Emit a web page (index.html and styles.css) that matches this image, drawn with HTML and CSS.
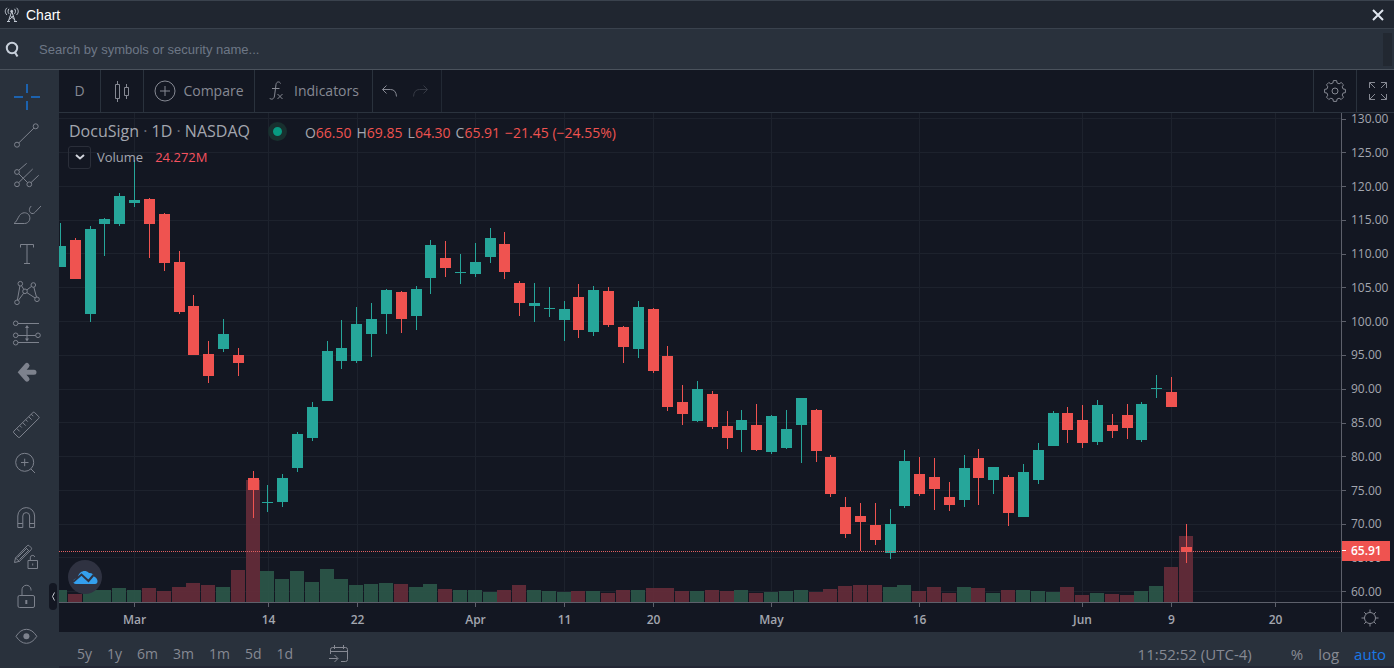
FILE: index.html
```html
<!DOCTYPE html>
<html lang="en">
<head>
<meta charset="utf-8">
<title>Chart</title>
<link rel="stylesheet" href="styles.css">
</head>
<body>
<div class="app">
  <header class="titlebar">
    <svg class="antenna" viewBox="0 0 16 16" width="16" height="16" aria-hidden="true">
      <path d="M7.500 5 4.300 14.500M8 5l3.200 9.500M6.500 9l3.800 3.500M9.200 9 5.500 12.500M3 14.500h3M10 14.500h3"/>
      <circle cx="7.700" cy="4.300" r="1"/>
      <path d="M5 1.800c-1.300 1.500-1.300 3.500 0 5M10.500 1.800c1.300 1.500 1.300 3.500 0 5M3 .8c-2.300 2.200-2.300 5 0 7.200M12.500.8c2.300 2.200 2.300 5 0 7.200"/>
    </svg>
    <h1 class="title">Chart</h1>
    <button class="close" aria-label="Close">
      <svg viewBox="0 0 12 12" width="12" height="12"><path d="M1 1l10 10M11 1 1 11"/></svg>
    </button>
  </header>

  <form class="search" role="search">
    <label class="search-label" for="q" aria-label="Search">
      <svg viewBox="0 0 16 18" width="16" height="18"><circle cx="7" cy="7" r="5.200"/><path d="M10 11.500l2.500 4"/></svg>
    </label>
    <input class="search-input" id="q" type="text" placeholder="Search by symbols or security name...">
    <span class="search-thumb"></span>
  </form>

  <div class="workspace">
    <nav class="tools" aria-label="Drawing tools">
      <div class="tool-group">
        <button class="tool tool-active" aria-label="Cross"><svg viewBox="0 0 28 28"><path d="M1 13h9M18 13h9M14 0v9M14 17v9"/></svg></button>
        <button class="tool" aria-label="Trend line"><svg viewBox="0 0 28 28"><circle cx="4" cy="21.700" r="2.500"/><circle cx="22.700" cy="3.300" r="2.500"/><path d="M5.800 19.900 20.900 5.100"/></svg></button>
        <button class="tool" aria-label="Pitchfork"><svg viewBox="0 0 28 28"><circle cx="4" cy="10" r="2.400"/><circle cx="4" cy="22.300" r="2.400"/><circle cx="16.300" cy="22.300" r="2.400"/><path d="M5.700 8.300l8-7M5.700 20.600 19.700 7M18 20.600l7.700-7.300M5.700 11.700l8.900 8.900"/></svg></button>
        <button class="tool" aria-label="Brush"><svg viewBox="0 0 28 28"><path d="M1 22.500c2.500-1.500 3.500-5 5.500-8 2.500-3.500 7-3.500 9.300-.8 2.600 3.800.2 8.800-4.300 8.800zM18.300 5c-3 2.500-2.300 7 .7 7.500 1.500.2 2.300-.4 3-1.200L28 5"/></svg></button>
        <button class="tool" aria-label="Text"><svg viewBox="0 0 28 28"><path d="M7.500 7.500v-3h13v3M14 4.500v19M11 23.500h6"/></svg></button>
        <button class="tool" aria-label="Pattern"><svg viewBox="0 0 28 28"><circle cx="7.300" cy="4.700" r="2.300"/><circle cx="20.300" cy="6" r="2.300"/><circle cx="12" cy="12.300" r="2.300"/><circle cx="24" cy="20.300" r="2.300"/><circle cx="4" cy="23.300" r="2.300"/><path d="M6.900 7 4.400 21M8.500 6.700l2.300 3.700M10.700 14.200l-5.400 7.200M13.900 10.900l4.600-3.500M20.800 8.200l2.700 9.900M13.900 13.600l8.200 5.400"/></svg></button>
        <button class="tool" aria-label="Position"><svg viewBox="0 0 28 28"><circle cx="2.700" cy="5.300" r="2.300"/><circle cx="2.700" cy="17.300" r="2.300"/><circle cx="2.700" cy="24.700" r="2.300"/><circle cx="25" cy="17.300" r="2.300"/><path d="M5 5.500h21M5 17.500h17.700M5 24.500h21M14 9v13"/><path class="fill" d="M14 7l2 3h-4zM14 23.500l2-3h-4z"/></svg></button>
        <button class="tool" aria-label="Hide tools"><svg viewBox="0 0 28 28"><path class="heavy" d="M14 8.500l-6 6.800 6 6.800M9 15.300h12"/></svg></button>
      </div>
      <div class="tool-group">
        <button class="tool" aria-label="Measure"><svg viewBox="0 0 28 28"><path d="M.8 20.200 20 1.500q.8-.8 1.600 0l4.200 4.200q.8.800 0 1.600L6.800 26.200q-.8.800-1.600 0L.8 21.800q-.8-.8 0-1.600zM3.700 17.400l3 3M6.700 14.500l2 2M9.700 11.600l3 3M12.700 8.600l2 2M15.700 5.700l3 3M18.300 3.200l2 2"/></svg></button>
        <button class="tool" aria-label="Zoom in"><svg viewBox="0 0 28 28"><circle cx="11.700" cy="12.300" r="9"/><path d="M18 19l4 4M8 12.500h7.500M11.700 8.700v7.500"/></svg></button>
      </div>
      <div class="tool-group">
        <button class="tool" aria-label="Magnet"><svg viewBox="0 0 28 28"><path d="M4.800 23.500V12a8.400 8.400 0 0 1 16.800 0v11.500h-5V12a3.400 3.400 0 0 0-6.800 0v11.500zM4.800 19.500h5M16.600 19.500h5"/></svg></button>
        <button class="tool" aria-label="Lock drawing mode"><svg viewBox="0 0 28 28"><path d="M1.500 19.500l1-4.500L14.200 2.700q1-.9 2 0l2 2q.9 1 0 2L6.500 18.300zM12.500 4.500l4 4M4.500 14.500 14 5M6.500 16.500l9.500-9.500M2.500 15l4 3.500"/><path d="M15 17.500h9.500v8H15zM17.300 17.500v-2.700a2.300 2.300 0 0 1 4.500-.8M19.700 20.500v2"/></svg></button>
        <button class="tool" aria-label="Lock all"><svg viewBox="0 0 28 28"><rect x="5" y="13.500" width="16.500" height="12" rx="1.500"/><path d="M9 13.500V8a4.500 4.500 0 0 1 9-.5v1"/><path class="bold" d="M13.300 18v4"/></svg></button>
        <button class="tool" aria-label="Hide all"><svg viewBox="0 0 28 28"><path d="M3 15.300q4.500-7 10.400-7t10.400 7q-4.500 7-10.400 7T3 15.300z"/><circle class="fill" cx="13.400" cy="15.300" r="3"/></svg></button>
      </div>
      <button class="collapse" aria-label="Collapse toolbar"><svg viewBox="0 0 8 27" width="8" height="27"><path d="M5.500 9.500 3.500 13.500l2 4"/></svg></button>
    </nav>

    <main class="content">
      <div class="toolbar">
        <button class="bar-btn interval">D</button>
        <button class="bar-btn style-btn" aria-label="Candles"><svg viewBox="0 0 18 22" width="18" height="22"><path d="M2.500 4.500h4v14h-4zM4.500 1v3.500M4.500 18.500V22M11.500 7.500h4v8h-4zM13.500 4v3.500M13.500 15.500V19"/></svg></button>
        <button class="bar-btn compare"><svg viewBox="0 0 22 22" width="22" height="22"><circle cx="11" cy="11" r="10"/><path d="M6 11h10M11 6v10"/></svg>Compare</button>
        <button class="bar-btn indicators"><svg viewBox="0 0 18 22" width="18" height="22"><path d="M12.500 3.500C12 1.500 8.500 1 8 4.500L6.500 16c-.5 3.500-3.500 4-5 2M4 8.500h7.500M9.500 14l5 5M14.500 14l-5 5"/></svg>Indicators</button>
        <div class="history">
          <button class="icon-btn" aria-label="Undo"><svg viewBox="0 0 18 14" width="18" height="14"><path d="M5.500 1.500l-4 4 4 4M1.500 5.500h8q5.500 0 6 7"/></svg></button>
          <button class="icon-btn redo" aria-label="Redo"><svg viewBox="0 0 18 14" width="18" height="14"><path d="M11.500 1.500l4 4-4 4M15.500 5.500h-8q-5.500 0-6 7"/></svg></button>
        </div>
        <button class="bar-btn settings" aria-label="Settings"><svg viewBox="0 0 24 24" width="24" height="24"><circle cx="12" cy="12" r="3"/><path id="gear" d=""/></svg></button>
        <button class="bar-btn full" aria-label="Full screen"><svg viewBox="0 0 20 20" width="20" height="20"><path d="M1.500 7V1.500H7M1.500 1.500 7 7M13 1.500h5.500V7M18.500 1.500 13 7M1.500 13v5.500H7M1.500 18.500 7 13M18.500 13v5.500H13M18.500 18.500 13 13"/></svg></button>
      </div>

      <div class="chart">
        <section class="plot" aria-label="Price chart">
          <svg class="canvas" id="canvas" viewBox="0 0 1282 489" preserveAspectRatio="none"></svg>
          <div class="legend">
            <div class="legend-row">
              <h2 class="symbol">DocuSign <i>·</i> 1D <i>·</i> NASDAQ</h2>
              <span class="status"></span>
              <p class="ohlc"><span>O<b>66.50</b></span><span>H<b>69.85</b></span><span>L<b>64.30</b></span><span>C<b>65.91</b></span><b>−21.45 (−24.55%)</b></p>
            </div>
            <div class="legend-row volume-row">
              <button class="toggle" aria-label="Toggle legend"><svg viewBox="0 0 12 8" width="12" height="8"><path d="M2 2l4 3.500L10 2"/></svg></button>
              <span class="study">Volume</span><b class="study-value">24.272M</b>
            </div>
          </div>
          <a class="brand" href="#" aria-label="Charting library"><svg viewBox="0 0 34 34" width="34" height="34">
            <path class="cloud" d="M8 24C4.500 24 4 19.500 8 18.500c1-.3 1.500-.7 2-2 1.500-5 7-7.500 11-3.500 3-.3 4.500 1.500 5 3.500 4 1.500 5 7.500 1 7.500z"/>
            <path class="trend" d="M5 22l8.500-7.500 7 6.500 5-6"/>
          </svg></a>
        </section>
        <aside class="prices" aria-label="Price scale">
          <ol class="price-list">
            <li>130.00</li><li>125.00</li><li>120.00</li><li>115.00</li><li>110.00</li><li>105.00</li><li>100.00</li><li>95.00</li><li>90.00</li><li>85.00</li><li>80.00</li><li>75.00</li><li>70.00</li><li>65.00</li><li>60.00</li>
          </ol>
          <span class="last-price">65.91</span>
        </aside>
        <svg class="times" id="times"></svg>
        <button class="axis-settings" aria-label="Axis settings"><svg viewBox="0 0 18 18" width="18" height="18"><circle cx="9" cy="9" r="5.500"/><path d="M9 3.500v-3M9 14.500v3M3.500 9h-3M14.500 9h3M5 5 3.200 3.200M13 5l1.800-1.800M5 13l-1.800 1.800M13 13l1.800 1.800"/></svg></button>
      </div>

      <footer class="bottom">
        <button class="range">5y</button><button class="range">1y</button><button class="range">6m</button><button class="range">3m</button><button class="range">1m</button><button class="range">5d</button><button class="range">1d</button>
        <button class="range goto" aria-label="Go to date"><svg viewBox="0 0 20 18" width="20" height="18"><path d="M1.500 9V4.500q0-2 2-2h13q2 0 2 2v10q0 2-2 2H12M1.500 6.500h17M5.500 0v4M14.500 0v4M0 13.500h8.500M5.500 10l3.500 3.500L5.500 17"/></svg></button>
        <button class="scale clock">11:52:52 (UTC-4)</button>
        <button class="scale percent">%</button><button class="scale log">log</button><button class="scale auto">auto</button>
      </footer>
    </main>
  </div>
</div>
<script src="chart.js"></script>
</body>
</html>
```

FILE: styles.css
```css
* { box-sizing: border-box; }
body {
  margin: 0;
  background: #29313c;
  color: #868993;
  font: 14px/20px "Open Sans", "Noto Sans", sans-serif;
}
button {
  display: flex;
  align-items: center;
  justify-content: center;
  margin: 0;
  padding: 0;
  border: 0;
  background: none;
  color: inherit;
  font: inherit;
  cursor: pointer;
}
svg { flex: none; fill: none; stroke: currentColor; }
.app { display: flex; flex-direction: column; min-height: 100vh; }

.titlebar {
  display: flex;
  align-items: center;
  height: 29px;
  padding: 0 10px 0 4px;
  border-top: 1px solid #3a424d;
  border-bottom: 1px solid #3a424d;
  background: #202630;
  color: #fff;
}
.antenna { color: #c3cad4; }
.antenna circle { fill: currentColor; }
.title { margin: 0 auto 0 6px; font: 14px/20px "Liberation Sans", Arial, sans-serif; }
.close svg { stroke-width: 2; color: #dfe5ee; }

.search {
  display: flex;
  align-items: center;
  height: 41px;
  padding: 1px 2px 0 5px;
  border-bottom: 1px solid #4a525c;
}
.search-label { display: flex; color: #c8d0db; }
.search-label svg { stroke-width: 2; }
.search-input {
  flex: 1;
  margin-left: 18px;
  padding: 0;
  border: 0;
  outline: 0;
  background: none;
  color: #d0d4dc;
  font: 13px/20px "Liberation Sans", Arial, sans-serif;
}
.search-input::placeholder { color: #6d7786; opacity: 1; }
.search-thumb { width: 9px; height: 33px; background: #222831; }

.workspace { display: flex; flex: 1; }
.tools {
  position: relative;
  display: flex;
  flex-direction: column;
  gap: 15px;
  width: 59px;
  padding: 8px 5px 0 0;
  color: #7d828d;
}
.tool { width: 54px; height: 39px; }
.tool svg { width: 28px; height: 28px; overflow: visible; }
.tool-active { color: #1c62ae; }
.tool-active svg { stroke-width: 2; }
.fill { fill: currentColor; stroke: none; }
.heavy { stroke-width: 5; stroke-linecap: round; }
.bold { stroke-width: 2; }
.collapse {
  position: absolute;
  right: 2px;
  bottom: 58px;
  border-radius: 4px;
  background: #131722;
  color: #c3c7cf;
}

.content { display: flex; flex: 1; flex-direction: column; min-width: 0; }
.toolbar {
  display: flex;
  height: 43px;
  border-bottom: 1px solid #2b333e;
  background: #131722;
}
.bar-btn { border-right: 1px solid #2a323d; gap: 8px; }
.interval { width: 42px; }
.style-btn { width: 43px; }
.compare { width: 111px; gap: 7px; }
.indicators { width: 118px; }
.history {
  display: flex;
  align-items: center;
  justify-content: center;
  gap: 13px;
  width: 69px;
  padding-right: 3px;
  border-right: 1px solid #222934;
}
.redo { color: #363a45; }
.settings { width: 44px; margin-left: auto; border-left: 1px solid #2a323d; }
.full { width: 37px; padding-left: 4px; border: 0; }

.chart {
  display: grid;
  flex: 1;
  grid-template-columns: 1fr 53px;
  grid-template-rows: 1fr 30px;
  background: #131722;
}
.plot { position: relative; min-width: 0; }
.canvas { position: absolute; width: 100%; height: 100%; stroke: none; }
.grid { fill: #1d222d; }
.up { fill: #26a69a; }
.down { fill: #ef5350; }
.vol-up { fill: #2b5749; opacity: 0.92; }
.vol-down { fill: #652d39; opacity: 0.92; }
.last-line { stroke: #e06060; stroke-dasharray: 1 1; }

.legend { position: absolute; top: 7px; left: 10px; color: #a3a6af; }
.legend b { color: #f7525f; font-weight: 400; }
.legend-row { display: flex; align-items: center; height: 22px; }
.symbol { margin: 0; font-size: 16px; font-weight: 400; }
.symbol i { color: #6a6d78; font-style: normal; }
.status {
  width: 19px;
  height: 19px;
  margin: 0 18px;
  border: 5px solid #18302f;
  border-radius: 50%;
  background: #089981;
}
.ohlc { display: flex; gap: 5px; margin: 3px 0 0; font-size: 14px; }
.legend .ohlc b { color: #ef5350; }
.volume-row { margin-top: 4px; font-size: 13px; }
.toggle {
  width: 23px;
  height: 23px;
  margin: 0 6px 0 -1px;
  border: 1px solid #2a2e39;
  border-radius: 3px;
  color: #d1d4dc;
}
.toggle svg { stroke-width: 2; }
.study-value { margin-left: 12px; }
.brand {
  position: absolute;
  bottom: 8px;
  left: 9px;
  display: flex;
  border-radius: 50%;
  background: #2f3241;
}
.cloud { fill: #34a0ee; stroke: none; }
.trend { stroke: #2f3241; stroke-width: 2; }

.prices {
  position: relative;
  overflow: hidden;
  border-left: 1px solid #5d606b;
  color: #a3a6af;
  font-size: 12px;
  line-height: 16px;
}
.price-list {
  display: flex;
  flex-direction: column;
  justify-content: space-between;
  height: 100%;
  margin: -2px 0 0;
  padding: 0;
  list-style: none;
}
.price-list li { display: flex; align-items: center; gap: 5px; }
.price-list li::before { width: 4px; height: 1px; background: #5d606b; content: ""; }
.last-price {
  position: absolute;
  bottom: 41px;
  left: -1px;
  width: 49px;
  padding: 2px 0 2px 10px;
  background: #ef5350;
  color: #fff;
  font-weight: 600;
}
.last-price::before {
  position: absolute;
  top: 9px;
  left: 0;
  width: 5px;
  height: 1px;
  background: #fff;
  content: "";
}
.times { width: 100%; height: 30px; border-top: 1px solid #5d606b; overflow: hidden; }
.times line { stroke: #5d606b; }
.times text { fill: #a3a6af; stroke: none; font-size: 12px; font-weight: 600; text-anchor: middle; }
.axis-settings { border-top: 1px solid #5d606b; border-left: 1px solid #5d606b; padding-left: 4px; }

.bottom { display: flex; align-items: center; gap: 15px; height: 36px; padding: 10px 8px 0 18px; border-bottom: 2px solid #232735; }
.goto { margin-left: 21px; }
.scale { font-size: 15px; }
.clock { margin-left: auto; }
.percent { margin-left: 24px; }
.auto { color: #1a78e6; }
```

FILE: chart.js
```js
// Each session: wick top, body top, body bottom, wick bottom, volume top, direction (1 = up).
const sessions = [
  [223,246,267,267,590,1],[238,240,279,279,594,0],[226,229,314,322,590,1],[218,219,224,256,590,1],
  [193,196,224,226,588,1],[160,200,203,207,590,1],[198,199,224,258,588,0],[213,214,263,271,591,0],
  [251,262,312,314,587,0],[295,306,355,355,583,0],[341,354,376,383,585,0],[319,334,349,352,587,1],
  [348,355,363,376,570,0],[471,478,490,518,480,0],[485,502,503,512,571,1],[474,478,502,507,579,1],
  [432,434,468,472,571,1],[402,407,438,441,582,1],[341,351,401,401,569,1],[320,348,361,369,579,1],
  [307,324,361,363,585,1],[303,319,334,357,584,1],[289,290,314,334,583,1],[291,292,319,333,584,0],
  [286,289,316,330,587,1],[240,245,278,294,584,1],[241,258,268,277,589,0],[254,272,273,284,590,1],
  [243,262,274,277,590,1],[228,238,257,263,592,1],[232,244,272,279,590,0],[281,283,303,316,585,0],
  [283,303,306,322,590,1],[287,308,309,317,591,1],[301,309,320,341,592,1],[284,297,330,338,591,0],
  [286,290,332,336,591,1],[287,291,325,327,593,0],[326,327,347,363,590,0],[301,307,349,358,590,1],
  [308,309,371,373,588,0],[346,356,407,411,588,0],[385,402,414,425,591,0],[381,389,421,422,591,1],
  [391,394,427,429,590,0],[411,426,438,449,591,0],[410,420,430,452,590,1],[404,425,450,451,593,0],
  [415,416,452,454,592,1],[410,429,448,449,591,1],[398,398,425,463,590,1],[409,410,451,462,592,0],
  [455,457,494,497,589,0],[497,507,534,538,586,0],[503,516,522,551,585,0],[503,525,540,545,585,0],
  [509,524,553,559,587,1],[450,461,506,508,585,1],[457,474,494,496,591,0],[458,477,489,510,587,0],
  [482,497,505,511,593,0],[455,468,500,507,587,1],[449,458,478,505,588,0],[467,467,480,494,593,1],
  [475,477,513,526,590,0],[464,472,517,517,590,1],[443,450,480,484,591,1],[411,413,446,446,592,1],
  [407,413,430,443,587,0],[405,420,443,448,595,0],[400,405,442,445,593,1],[414,425,431,438,594,0],
  [404,415,428,439,595,0],[402,404,440,442,591,1],[375,388,389,398,586,1],[377,392,407,407,567,0],
  [524,547,552,563,536,0]
];
const dates = [["Mar",75],["14",209],["22",298],["Apr",416],["11",505],["20",594],["May",712],["16",860],["Jun",1023],["9",1112],["20",1216]];

const NS = "http://www.w3.org/2000/svg";
const TOP = 113;
const WIDTH = 1282;
const HEIGHT = 489;
const STEP = 14.814;

function add(parent, name, attrs) {
  const el = document.createElementNS(NS, name);
  for (const key in attrs) el.setAttribute(key, attrs[key]);
  parent.appendChild(el);
  return el;
}
function box(parent, cls, x, y, width, height) {
  add(parent, "rect", { class: cls, x, y, width, height });
}

const canvas = document.getElementById("canvas");
for (let i = 0; i < 15; i++) box(canvas, "grid", 0, Math.round(5.2 + i * 33.79), WIDTH, 1);
dates.forEach(([, x]) => box(canvas, "grid", x, 0, 1, HEIGHT));

const centre = i => Math.round(1 + i * STEP);
sessions.forEach(([, , , , v, up], i) =>
  box(canvas, up ? "vol-up" : "vol-down", centre(i) - 7, v - TOP, 14, HEIGHT + TOP - v));
sessions.forEach(([high, top, bottom, low, , up], i) => {
  const cls = up ? "up" : "down";
  box(canvas, cls, centre(i), high - TOP, 1, low - high);
  box(canvas, cls, centre(i) - 5, top - TOP, 11, bottom - top);
});
add(canvas, "line", { class: "last-line", x1: 0, x2: WIDTH, y1: 438.5, y2: 438.5 });

const times = document.getElementById("times");
dates.forEach(([label, x]) => {
  const at = (x + 0.5) / WIDTH * 100 + "%";
  add(times, "line", { x1: at, x2: at, y1: 0, y2: 4 });
  add(times, "text", { x: at, y: 21 }).textContent = label;
});

// Gear outline: eight rounded teeth around the hub.
const points = [];
for (let i = 0; i < 8; i++) {
  [[-15, 8.3], [-9, 10.5], [9, 10.5], [15, 8.3]].forEach(([offset, radius]) => {
    const a = (i * 45 + offset) * Math.PI / 180;
    points.push((12 + radius * Math.sin(a)).toFixed(1) + " " + (12 - radius * Math.cos(a)).toFixed(1));
  });
}
document.getElementById("gear").setAttribute("d", "M" + points.join("L") + "Z");
```
